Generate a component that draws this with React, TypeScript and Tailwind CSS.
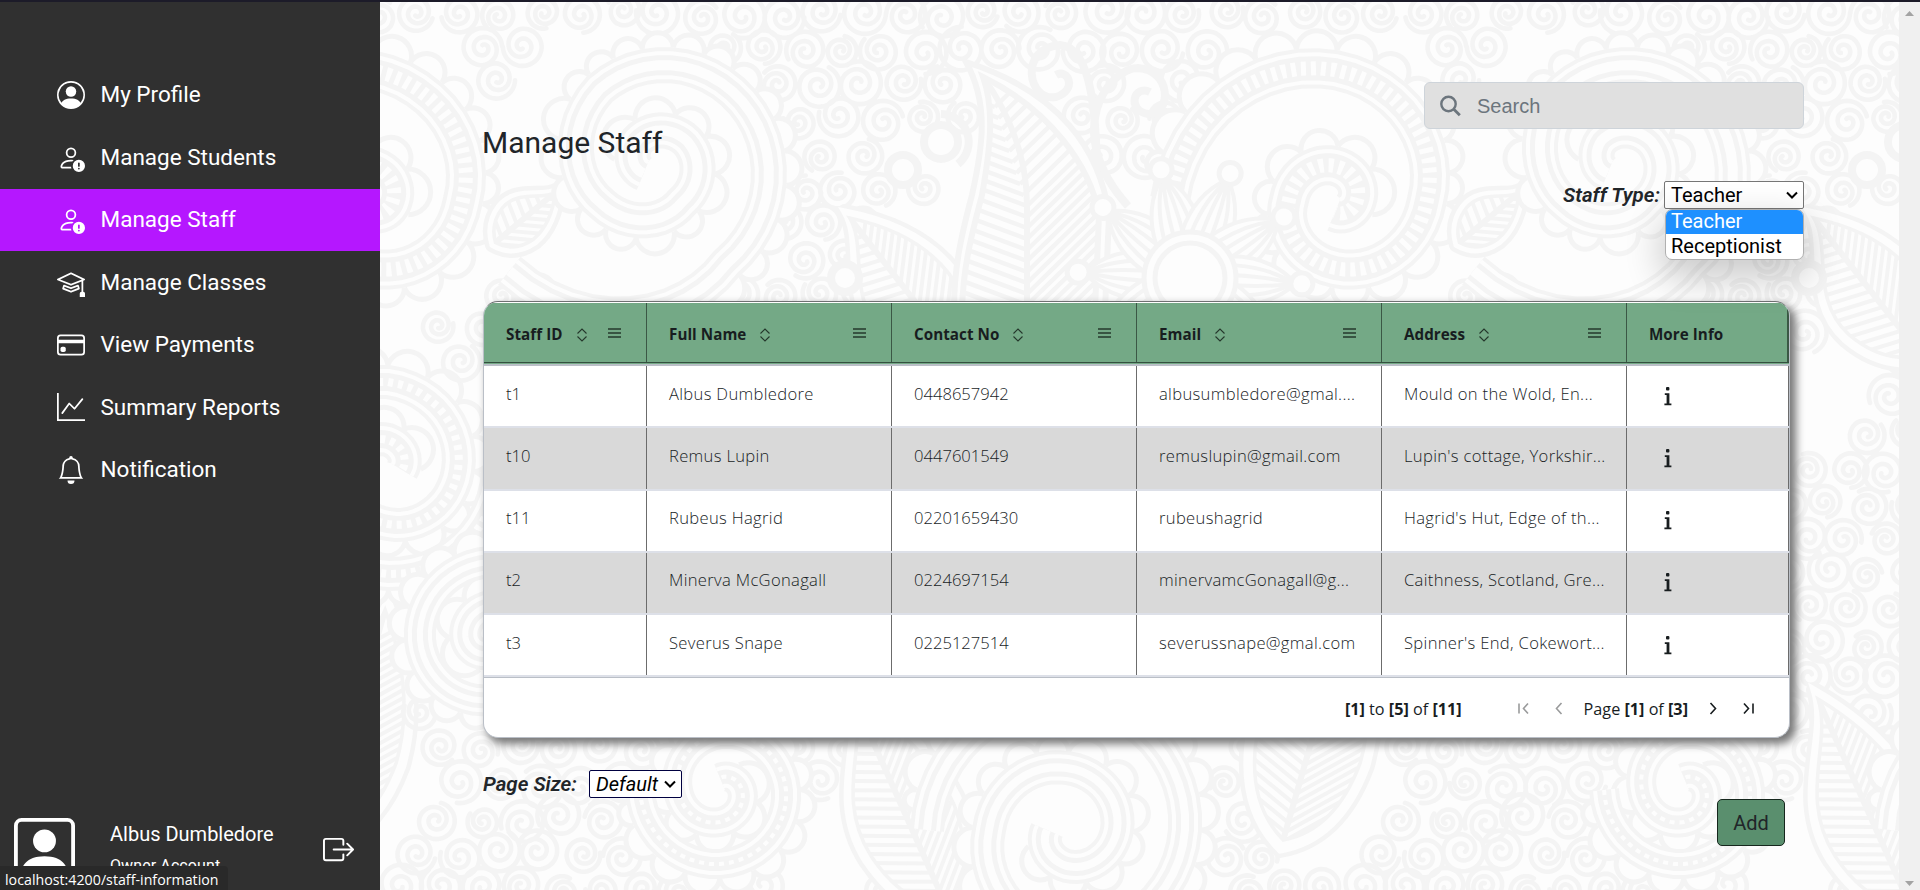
import React from 'react';
import {
  BsPersonCircle,
  BsPersonExclamation,
  BsMortarboard,
  BsCreditCard,
  BsGraphUp,
  BsBell,
  BsPersonSquare,
  BsBoxArrowRight,
} from 'react-icons/bs';
import type { IconType } from 'react-icons';

const INK = '#f4f4f4';
const PAPER = '#fdfdfd';

type Pt = [number, number];

const line = (pts: Pt[]) => 'M' + pts.map((p) => p[0].toFixed(1) + ' ' + p[1].toFixed(1)).join('L');

/* Spiral through radii given for each quarter turn. */
function swirl(cx: number, cy: number, start: number, dir: number, radii: number[]): Pt[] {
  const pts: Pt[] = [];
  const n = radii.length - 1;
  for (let i = 0; i <= n * 12; i++) {
    const k = Math.min(Math.floor(i / 12), n - 1);
    const f = i / 12 - k;
    const r = radii[k] * (1 - f) + radii[k + 1] * f;
    const a = start + (dir * i * Math.PI) / 24;
    pts.push([cx + r * Math.cos(a), cy + r * Math.sin(a)]);
  }
  return pts;
}

function curl(cx: number, cy: number, r: number, start: number, dir: number) {
  return line(swirl(cx, cy, start, dir, [r, r, r * 0.98, r * 0.9, r * 0.7, r * 0.52, r * 0.45, r * 0.4, r * 0.28, r * 0.12]));
}

/* Row of half-moon lobes that follows a polyline. */
function lobes(pts: Pt[], offset: number, size: number) {
  let d = '';
  let acc = 0;
  let last: Pt | null = null;
  for (let i = 1; i < pts.length; i++) {
    const [x0, y0] = pts[i - 1];
    const [x1, y1] = pts[i];
    const len = Math.hypot(x1 - x0, y1 - y0);
    acc += len;
    const nx = (-(y1 - y0) / len) * offset;
    const ny = ((x1 - x0) / len) * offset;
    const p: Pt = [x1 + nx, y1 + ny];
    if (!last) last = p;
    if (acc >= size) {
      const r = Math.hypot(p[0] - last[0], p[1] - last[1]) / 2;
      d += `M${last[0].toFixed(1)} ${last[1].toFixed(1)}A${r.toFixed(1)} ${r.toFixed(1)} 0 0 ${offset < 0 ? 1 : 0} ${p[0].toFixed(1)} ${p[1].toFixed(1)}`;
      last = p;
      acc = 0;
    }
  }
  return d;
}

function Band({ pts, w, beads, lobe }: { pts: Pt[]; w: number; beads?: boolean; lobe?: number }) {
  const d = line(pts);
  return (
    <g fill="none">
      {lobe ? <path d={lobes(pts, lobe, 24)} stroke={INK} strokeWidth={5} fill={PAPER} /> : null}
      <path d={d} stroke={INK} strokeWidth={w} />
      <path d={d} stroke={PAPER} strokeWidth={w - 8} />
      <path d={d} stroke={INK} strokeWidth={w - 16} />
      {beads ? <path d={d} stroke={PAPER} strokeWidth={w - 26} strokeDasharray="5 5" /> : <path d={d} stroke={PAPER} strokeWidth={w - 26} />}
    </g>
  );
}

function Leaf({ x, y, h, w, rot }: { x: number; y: number; h: number; w: number; rot: number }) {
  const outline = `M0 0C${-w * 0.05} ${h * 0.2} ${-w * 0.6} ${h * 0.35} ${-w * 0.5} ${h * 0.65}Q${-w * 0.4} ${h * 0.9} 0 ${h}Q${w * 0.45} ${h * 0.9} ${w * 0.5} ${h * 0.6}C${w * 0.5} ${h * 0.35} ${w * 0.25} ${h * 0.15} 0 0Z`;
  let ribs = '';
  for (let k = 0.16; k < 1.3; k += 10 / h) {
    const cy = h * k;
    ribs += `M0 ${cy}L${-w * 0.5} ${cy - h * 0.1}M0 ${cy}L${w * 0.5} ${cy - w * 0.5}`;
  }
  return (
    <g transform={`translate(${x} ${y}) rotate(${rot})`}>
      <path d={outline} fill={PAPER} stroke={INK} strokeWidth={16} strokeLinejoin="round" />
      <path d={outline} fill={PAPER} stroke={PAPER} strokeWidth={7} />
      <clipPath id={`leaf${x}-${y}`}>
        <path d={outline} transform={`translate(0 ${h * 0.04}) scale(.88 .92)`} />
      </clipPath>
      <g clipPath={`url(#leaf${x}-${y})`}>
        <path d={ribs} stroke={INK} strokeWidth={4} fill="none" />
        <path d={`M0 0V${h}`} stroke={INK} strokeWidth={6} />
      </g>
      <path d={outline} transform={`translate(0 ${h * 0.04}) scale(.88 .92)`} fill="none" stroke={INK} strokeWidth={4} />
    </g>
  );
}

/* The tall feather between the blossom and the curls. */
function Feather() {
  const outer = 'M966 62C990 105 982 150 972 195C960 240 954 270 954 310L1105 310L1109 215C1100 150 1060 92 966 62Z';
  const inner = 'M983 77C995 110 990 150 982 195C970 240 963 270 962 310L1095 310L1099 215C1090 165 1050 110 983 77Z';
  let ribs = '';
  for (let y = 95; y < 400; y += 11) {
    const x = y < 190 ? 990 + ((y - 80) / 110) * 36 : 1027;
    ribs += `M${x} ${y + 12}L${x - 75} ${y - 16}M${x} ${y + 12}L${x + 90} ${y - 76}`;
  }
  return (
    <g stroke={INK} fill="none">
      <path d={outer} fill={PAPER} strokeWidth={6} />
      <clipPath id="feather">
        <path d={inner} />
      </clipPath>
      <path d={ribs} strokeWidth={4.5} clipPath="url(#feather)" />
      <path d="M984 78Q1027 140 1027 205V310" strokeWidth={6} />
      <path d={inner} strokeWidth={6} />
    </g>
  );
}

function Flower({ x, y }: { x: number; y: number }) {
  const petals = [];
  for (let a = -177; a < 180; a += 36) {
    petals.push(
      <g key={a} transform={`translate(${x} ${y}) rotate(${a + 90})`} stroke={INK} fill="none" strokeWidth={4}>
        <path d="M-24 -40Q-26 -80 0 -106Q26 -80 24 -40Z" fill={PAPER} />
        <path d="M-15 -45Q-14 -80 0 -104M-5 -45Q-5 -80 0 -104M5 -45Q5 -80 0 -104M15 -45Q14 -80 0 -104" />
        <circle cx={0} cy={-112} r={11} fill={PAPER} strokeWidth={5} />
      </g>,
    );
  }
  return (
    <g>
      {petals}
      <circle cx={x} cy={y} r={46} fill={PAPER} stroke={INK} strokeWidth={5} />
      <circle cx={x} cy={y} r={35} fill={PAPER} stroke={INK} strokeWidth={5} />
    </g>
  );
}

const solids: [number, number, number][] = [
  [640, 175, 150],
  [1315, 180, 160],
  [1190, 278, 125],
  [1000, 110, 30],
  [1025, 180, 78],
  [1025, 260, 80],
  [1056, 78, 32],
  [1138, 90, 32],
  [940, 140, 28],
  [903, 170, 25],
  [940, 260, 60],
  [1067, 820, 160],
  [720, 810, 85],
  [1352, 470, 130],
  [490, 640, 90],
  [830, 860, 60],
  [1330, 800, 70],
  [850, 400, 60],
];

const curls: string[] = [];
(() => {
  let seed = 11;
  const rnd = () => {
    seed = (seed * 16807) % 2147483647;
    return seed / 2147483647;
  };
  for (let row = 0, y = 14; y < 910; y += 35, row++) {
    for (let x = 420 + (row % 2) * 20; x < 1384; x += 40.2) {
      const px = x + (rnd() - 0.5) * 8;
      const py = y + (rnd() - 0.5) * 8;
      const r = 15 + rnd() * 7;
      const a = rnd() * 6.28;
      const dir = rnd() > 0.5 ? 1 : -1;
      if (solids.some(([sx, sy, sr]) => [0, 964, -964].some((o) => Math.hypot(px - sx - o, py - sy) < sr))) continue;
      curls.push(curl(px, py, r, a, dir));
    }
  }
})();

const ringRight = swirl(1335, 200, Math.PI, 1, [165, 130, 92, 68, 46, 34, 22, 12]);
const ringLeft = swirl(655, 165, Math.PI * 0.8, -1, [180, 122, 108, 94, 66, 46, 40, 30, 14]);
const ringBottom = swirl(1067, 830, Math.PI, 1, [140, 130, 118, 105, 78, 62, 50, 36, 20]);
const ringSide = swirl(1352, 470, 0, 1, [110, 104, 96, 88, 70, 54, 42, 30, 14]);
const ringLow = swirl(720, 790, Math.PI, -1, [80, 74, 66, 56, 42, 32, 22, 12]);
const ringFoot = swirl(490, 640, 0, -1, [84, 78, 70, 60, 46, 34, 24, 12]);

function Tile() {
  return (
    <g>
      <path d={curls.join('')} fill="none" stroke={INK} strokeWidth={4.6} strokeLinecap="round" />
      <Leaf x={845} y={212} h={190} w={100} rot={-38} />
      <Leaf x={1352} y={600} h={260} w={120} rot={16} />
      <Leaf x={850} y={690} h={250} w={110} rot={-24} />
      <Leaf x={558} y={190} h={85} w={50} rot={50} />
      <g fill="none" stroke={INK} strokeWidth={8}>
        <path d="M1128 206C1060 130 1110 68 1138 68C1172 70 1172 115 1148 114C1126 110 1134 84 1150 92M1098 206C1096 140 1098 48 1060 45C1018 48 1028 102 1056 97C1078 90 1068 68 1056 75" />
        <circle cx={941} cy={142} r={17} fill={PAPER} />
        <path d="M941 114A28 28 0 0 1 958 164" />
        <circle cx={903} cy={170} r={15} fill={PAPER} />
        <circle cx={845} cy={278} r={14} fill={PAPER} />
      </g>
      <Feather />
      <Band pts={ringSide} w={34} beads lobe={-17} />
      <Band pts={ringBottom} w={34} lobe={-17} />
      <Band pts={ringLow} w={30} beads lobe={15} />
      <Band pts={ringFoot} w={32} lobe={16} />
      <Band pts={ringLeft} w={36} lobe={18} />
      <Band pts={ringRight} w={40} beads lobe={-20} />
      <Flower x={1190} y={278} />
    </g>
  );
}

function Wallpaper() {
  return (
    <svg className="pointer-events-none absolute inset-0 -z-10" width={1519} height={888} viewBox="380 2 1519 888" aria-hidden="true">
      <rect x={380} y={0} width={1519} height={890} fill={PAPER} />
      <g transform="translate(-964 0)">
        <Tile />
      </g>
      <Tile />
      <g transform="translate(964 0)">
        <Tile />
      </g>
    </svg>
  );
}

const menu: { label: string; Icon: IconType; active?: boolean }[] = [
  { label: 'My Profile', Icon: BsPersonCircle },
  { label: 'Manage Students', Icon: BsPersonExclamation },
  { label: 'Manage Staff', Icon: BsPersonExclamation, active: true },
  { label: 'Manage Classes', Icon: BsMortarboard },
  { label: 'View Payments', Icon: BsCreditCard },
  { label: 'Summary Reports', Icon: BsGraphUp },
  { label: 'Notification', Icon: BsBell },
];

function Sidebar() {
  return (
    <aside className="relative flex w-[380px] shrink-0 flex-col overflow-hidden bg-[#303030] text-white">
      <nav className="mt-[62px] flex flex-col">
        {menu.map(({ label, Icon, active }) => (
          <a
            key={label}
            className={`flex h-[62.45px] items-center gap-[16px] pl-[56.5px] text-[22.5px] ${active ? 'bg-[#b517ff]' : ''}`}
          >
            <Icon size={28} />
            <span className="whitespace-nowrap">{label}</span>
          </a>
        ))}
      </nav>
      <div className="mt-auto flex h-[74px] items-start pl-[14px]">
        <BsPersonSquare size={61} className="mt-0.5 shrink-0" />
        <div className="ml-[35px] w-[213px]">
          <div className="mt-[6px] text-[20px] leading-6">Albus Dumbledore</div>
          <div className="mt-[10px] text-[16px] leading-5 tracking-[0.1px]">Owner Account</div>
        </div>
        <BsBoxArrowRight size={31} className="mt-[18px] shrink-0" />
      </div>
      <div className="absolute bottom-0 left-0 flex h-6 w-[228px] items-center rounded-tr-[4px] bg-[#292929] pt-1 pl-[5px] font-['Open_Sans',sans-serif] text-[14.2px] tracking-[0.02px] whitespace-nowrap">
        localhost:4200/staff-information
      </div>
    </aside>
  );
}

function Chevron() {
  return (
    <svg width={12} height={8} viewBox="0 0 12 8" fill="none" stroke="black" strokeWidth={2}>
      <path d="M1 1.500l5 5 5-5" />
    </svg>
  );
}

const columns = ['Staff ID', 'Full Name', 'Contact No', 'Email', 'Address', 'More Info'];

const rows = [
  ['t1', 'Albus Dumbledore', '0448657942', 'albusumbledore@gmal....', 'Mould on the Wold, En...'],
  ['t10', 'Remus Lupin', '0447601549', 'remuslupin@gmail.com', "Lupin's cottage, Yorkshir..."],
  ['t11', 'Rubeus Hagrid', '02201659430', 'rubeushagrid', "Hagrid's Hut, Edge of th..."],
  ['t2', 'Minerva McGonagall', '0224697154', 'minervamcGonagall@g...', 'Caithness, Scotland, Gre...'],
  ['t3', 'Severus Snape', '0225127514', 'severussnape@gmal.com', "Spinner's End, Cokewort..."],
];

const TRACKING = ['', 'tracking-[0.32px]', '', 'tracking-[0.33px]', 'tracking-[0.32px]'];

const GRID = 'grid grid-cols-[163px_245px_245px_245px_245px_162px]';

function InfoGlyph() {
  return (
    <svg width={8} height={19} viewBox="0 0 8 19" fill="#181d1f">
      <rect x={2} y={0} width={3.4} height={3.4} rx={1} />
      <path d="M.8 6.200h4.600v10.400h2V18.300H.4v-1.700h2.200V7.900H.8z" />
    </svg>
  );
}

function Pager({ d, off }: { d: string; off?: boolean }) {
  return (
    <svg width={16} height={16} viewBox="0 0 16 16" fill="none" stroke={off ? '#9a9b9c' : '#181d1f'} strokeWidth={1.6}>
      <path d={d} />
    </svg>
  );
}

function StaffTable() {
  return (
    <div className="mt-[92px] flex h-[437px] w-[1307px] flex-col overflow-hidden rounded-[15px] border border-[#babfc7] border-t-[#6f7072] bg-white font-['Open_Sans',sans-serif] text-[#181d1f] shadow-[5px_5px_8px_1px_#777]">
      <div className={`${GRID} mt-px h-[60px] shrink-0 border-b border-[#34503f] bg-[#74a986] text-[15.2px] font-bold`}>
        {columns.map((c, i) => (
          <div key={c} className={`flex items-center border-r border-[#3b5745] pt-1 pl-[22px] ${i === 5 ? 'border-r-2' : ''}`}>
            <span className="tracking-[0.05px] whitespace-nowrap">{c}</span>
            {i < 5 && (
              <>
                <svg className="ml-[13px]" width={12} height={14} viewBox="0 0 12 14" fill="none" stroke="#25382c" strokeWidth={1.1}>
                  <path d="M1.500 5.500L6 1l4.500 4.500M1.500 8.500L6 13l4.500-4.500" />
                </svg>
                <svg className="mr-[25px] mb-[4px] ml-auto" width={13} height={10} viewBox="0 0 13 10" fill="none" stroke="#25382c" strokeWidth={1.3}>
                  <path d="M0 1h13M0 5h13M0 9h13" />
                </svg>
              </>
            )}
          </div>
        ))}
      </div>
      <div className="h-[3px] shrink-0 bg-[linear-gradient(#74a986_1px,#babfc7_1px)]" />
      {rows.map((r, i) => (
        <div
          key={r[0]}
          className={`${GRID} h-[62.3px] shrink-0 border-b-2 border-[#dde0e8] text-[16.6px] font-light ${i % 2 ? 'bg-[#d9d9d9]' : 'bg-white'}`}
        >
          {r.map((v, j) => (
            <div key={j} className={`border-r border-[#6c6c6c] pt-[15.5px] pl-[22px] leading-6 whitespace-nowrap ${TRACKING[j]}`}>
              {v}
            </div>
          ))}
          <div className="border-r border-[#6c6c6c] pt-[20.5px] pl-[36.5px]">
            <InfoGlyph />
          </div>
        </div>
      ))}
      <div className="flex flex-1 items-center justify-end border-t border-[#babfc7] pt-0.5 pr-[33px] text-[16.2px]">
        <span className="mr-[54px]">
          <b>[1]</b> to <b>[5]</b> of <b>[11]</b>
        </span>
        <div className="flex items-center gap-[19px]">
          <Pager off d="M3 2.500v10M12 2.500l-4.500 5 4.500 5" />
          <Pager off d="M10.500 2L5.500 7.500l5 5.500" />
          <span className="-mx-0.5">
            Page <b>[1]</b> of <b>[3]</b>
          </span>
          <Pager d="M5.500 2l5 5.500-5 5.500" />
          <Pager d="M4 2.500l4.500 5-4.500 5M13 2.500v10" />
        </div>
      </div>
    </div>
  );
}

function Toolbar() {
  return (
    <div className="flex h-[127px] w-[1321px] justify-between">
      <h1 className="mt-[43px] -ml-px text-[30px] leading-9 text-[#212529]">Manage Staff</h1>
      <div className="flex flex-col items-end">
        <div className="flex h-[47px] w-[380px] items-center rounded-[6px] border border-[#ced4da] bg-[#e0e0e0] pl-[15px] font-['Liberation_Sans',sans-serif] text-[20px] text-[#6c757d]">
          <svg width={21} height={22} viewBox="0 0 21 22" fill="none" stroke="#6c757d" strokeWidth={2.4}>
            <circle cx={8.5} cy={9} r={7.2} />
            <path d="M13.800 14.300l6 6" strokeWidth={2.8} />
          </svg>
          <span className="ml-4">Search</span>
        </div>
        <div className="mt-[52px] flex h-7 items-center gap-1">
          <span className="text-[20.5px] font-semibold text-[#212529] italic">Staff Type:</span>
          <div className="relative z-10 flex h-7 w-[140px] items-center justify-between rounded-[2px] border border-[#767676] bg-white pr-[5px] pl-[6px] text-[20px] text-black">
            Teacher
            <Chevron />
            <div className="absolute top-[27px] -right-px w-[139px] overflow-hidden rounded-[7px] border border-[#b0b0b0] bg-white leading-[25px] shadow-[0_14px_36px_4px_rgba(0,0,0,0.2)]">
              <div className="bg-[#1e90ff] pl-[5px] leading-[23px] pb-px text-white">Teacher</div>
              <div className="pl-[5px]">Receptionist</div>
            </div>
          </div>
        </div>
      </div>
    </div>
  );
}

export default function App() {
  return (
    <div className="flex h-[890px] w-[1920px] flex-col overflow-hidden bg-[#fdfdfd] font-['Roboto',sans-serif]">
      <div className="h-0.5 shrink-0 bg-[#1c1b29]" />
      <div className="flex flex-1 overflow-hidden">
        <Sidebar />
        <main className="relative isolate flex w-[1519px] flex-col pt-20 pl-[103px]">
          <Wallpaper />
          <Toolbar />
          <StaffTable />
          <div className="mt-8 flex h-7 items-center text-[20px] text-[#212529] italic">
            <span className="w-[106px] text-[20.5px] font-semibold">Page Size:</span>
            <div className="flex h-7 w-[93px] items-center justify-between rounded-[2px] border border-[#000040] bg-white pr-[5px] pl-[6px] text-black">
              Default
              <Chevron />
            </div>
          </div>
          <button className="mt-px ml-[1234px] h-[47px] w-[68px] rounded-[5px] border border-[#16271d] bg-[#5a8f6e] text-[20px] text-[#212529]">
            Add
          </button>
        </main>
        <div className="flex w-[21px] flex-col items-center justify-between bg-[#f0f0f0] pt-[9px] pb-1">
          <svg width={9} height={5} viewBox="0 0 9 5" fill="#a3a3a3">
            <path d="M0 5L4.500 0 9 5z" />
          </svg>
          <svg width={9} height={5} viewBox="0 0 9 5" fill="#a3a3a3">
            <path d="M0 0l4.500 5L9 0z" />
          </svg>
        </div>
      </div>
    </div>
  );
}
